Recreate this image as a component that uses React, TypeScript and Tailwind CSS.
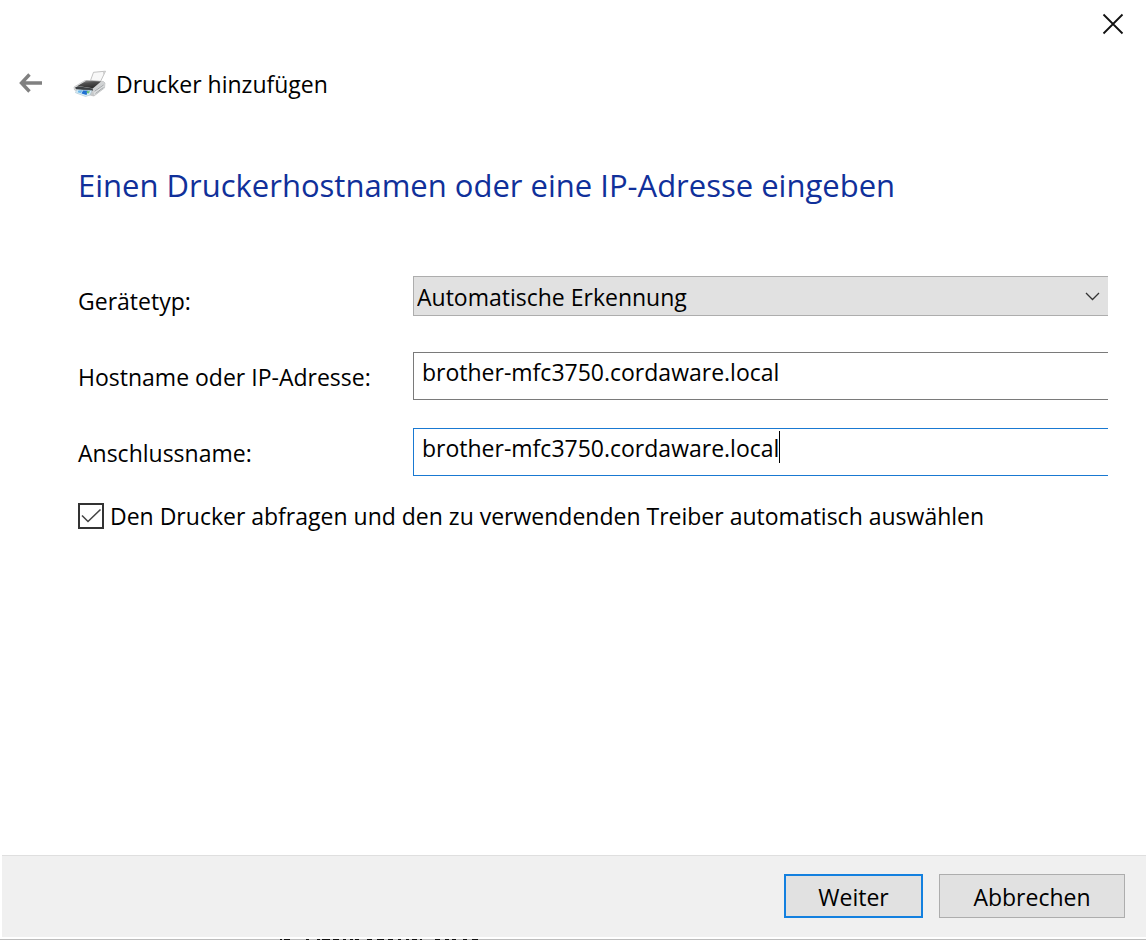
import React, { useState } from 'react';

interface FieldRowProps {
  id: string;
  label: string;
  children: React.ReactNode;
}

const FieldRow: React.FC<FieldRowProps> = ({ id, label, children }) => (
  <div className="flex h-12 items-start">
    <label htmlFor={id} className="w-[335px] shrink-0 pt-2 leading-[34px]">
      {label}
    </label>
    {children}
  </div>
);

const PrinterIcon = () => (
  <svg width="34" height="28" viewBox="0 0 34 28" aria-hidden="true">
    <defs>
      <linearGradient id="lid" x1="0" y1="0" x2="0.4" y2="1">
        <stop offset="0" stopColor="#a8a8a8" />
        <stop offset="0.45" stopColor="#4e4e4e" />
        <stop offset="1" stopColor="#2e2e2e" />
      </linearGradient>
      <linearGradient id="body" x1="0" y1="0" x2="1" y2="1">
        <stop offset="0" stopColor="#f4f4f4" />
        <stop offset="1" stopColor="#b5b8ba" />
      </linearGradient>
    </defs>
    {/* paper */}
    <path d="M17.5 10.5 20.5 2.3 32.5 1.2 27.5 11.5Z" fill="#f8f8f8" stroke="#b4b4b4" strokeWidth="0.8" />
    <path d="M32.5 1.2 30.5 5.5 30 2Z" fill="#cfcfcf" />
    {/* body */}
    <path d="M1 17 12 10.5 30.5 11.5 32 13 31.5 18 21 26 18.5 25.5 1.5 20Z" fill="url(#body)" stroke="#b3b5b7" strokeWidth="0.6" />
    <path d="M20.5 21 31.5 13.5 31.2 18 21 25.5Z" fill="#dcdedf" />
    <path d="M21.5 21.3 30.8 14.8M22.5 23.5 30.5 17.5" stroke="#8b8f92" strokeWidth="0.7" />
    <path d="M4.5 16 13.5 10.5 28 11.4 20 18.2Z" fill="url(#lid)" />
    <path d="M2 17.5 5 16.3 20 18.6 19.5 21 3 19.3Z" fill="#3c4043" />
    {/* tray with photo */}
    <path d="M3.5 19.8 19 20.5 17 25 12.5 26.5 2.5 22.7Z" fill="#d9eef8" stroke="#9eb8c5" strokeWidth="0.5" />
    <path d="M5.5 20.5 9.5 20.3 8 23.2 4.5 22.2Z" fill="#6fb9ea" />
    <path d="M10 20.5 15 20.8 13.5 25 8.5 23.6Z" fill="#1f6fd2" />
    <path d="M14 21 17 21.2 15.8 23.6 13.5 23Z" fill="#6cc080" />
  </svg>
);

const WindowsButton: React.FC<{ className: string; children: React.ReactNode }> = ({ className, children }) => (
  <button type="button" className={`h-11 bg-[#e1e1e1] pt-0.5 leading-8 ${className}`}>
    {children}
  </button>
);

export default function App() {
  const [host, setHost] = useState('brother-mfc3750.cordaware.local');
  const [port, setPort] = useState('brother-mfc3750.cordaware.local');
  const [autoDriver, setAutoDriver] = useState(true);

  return (
    <div className="relative flex min-h-screen flex-col border-b border-[#bcbcbc] bg-white pb-0.5 font-['Open_Sans','Noto_Sans',sans-serif] text-[23px] text-black">
      <div className="flex h-12 justify-end pr-3">
        <button type="button" aria-label="Schließen" className="flex w-[42px] items-center justify-center">
          <svg width="22" height="22" viewBox="0 0 22 22" fill="none" stroke="#111" strokeWidth="1.8">
            <path d="M1.5 1.5 20.5 20.5M20.5 1.5 1.5 20.5" />
          </svg>
        </button>
      </div>

      <header className="flex h-[72px] items-center pl-[18px]">
        <button type="button" aria-label="Zurück" className="mr-[30px]">
          <svg width="25" height="22" viewBox="0 0 25 22" fill="none" stroke="#808080" strokeWidth="3.4">
            <path d="M24 10H4M11.5 1.5 3.5 10 11.5 18.5" />
          </svg>
        </button>
        <PrinterIcon />
        <span className="ml-[9px] leading-8">Drucker hinzufügen</span>
      </header>

      <main className="flex-1 pr-[38px] pl-[78px]">
        <h1 className="pt-11 text-[31px] leading-[42px] text-[#10309a]">
          Einen Druckerhostnamen oder eine IP-Adresse eingeben
        </h1>

        <form className="mt-[70px]">
          <div className="flex flex-col gap-7">
            <FieldRow id="device" label="Gerätetyp:">
              <div className="relative flex-1">
                <select
                  id="device"
                  className="block h-10 w-full appearance-none border border-r-0 border-[#adadad] bg-[#e1e1e1] pt-0.5 pl-[3px] leading-8 outline-none"
                >
                  <option>Automatische Erkennung</option>
                </select>
                <svg className="pointer-events-none absolute top-4 right-2 h-[9px] w-[15px]" viewBox="0 0 15 9" fill="none" stroke="#333" strokeWidth="1.3">
                  <path d="M1 1 7.5 7.5 14 1" />
                </svg>
              </div>
            </FieldRow>

            <FieldRow id="host" label="Hostname oder IP-Adresse:">
              <input
                id="host"
                type="text"
                value={host}
                onChange={(e) => setHost(e.target.value)}
                className="h-12 min-w-0 flex-1 border border-r-0 border-[#7a7a7a] bg-white pb-2 pl-2 outline-none"
              />
            </FieldRow>

            <FieldRow id="port" label="Anschlussname:">
              <div className="flex h-12 min-w-0 flex-1 items-start border border-r-0 border-[#1979d2] pt-0.5 pl-2">
                <input
                  id="port"
                  type="text"
                  value={port}
                  onChange={(e) => setPort(e.target.value)}
                  className="field-sizing-content h-10 max-w-full bg-white pb-1.5 outline-none"
                />
                <span className="h-8 w-px bg-black" />
              </div>
            </FieldRow>
          </div>

          <label className="mt-6 flex items-center gap-1.5 leading-8">
            <span className="relative h-[26px] w-[26px] shrink-0">
              <input
                type="checkbox"
                checked={autoDriver}
                onChange={(e) => setAutoDriver(e.target.checked)}
                className="block h-[26px] w-[26px] appearance-none border-2 border-[#333] bg-white"
              />
              {autoDriver && (
                <svg className="pointer-events-none absolute inset-0" width="26" height="26" viewBox="0 0 26 26" fill="none" stroke="#444" strokeWidth="1.6">
                  <path d="M4 12.5 10 18.5 22.5 6.5" />
                </svg>
              )}
            </span>
            Den Drucker abfragen und den zu verwendenden Treiber automatisch auswählen
          </label>
        </form>
      </main>

      <footer className="ml-0.5 flex h-[82px] justify-end gap-4 border-t border-[#dfdfdf] bg-[#f0f0f0] pt-[18px] pr-[21px]">
        <WindowsButton className="w-[139px] border-2 border-[#1380df]">Weiter</WindowsButton>
        <WindowsButton className="w-[186px] border border-[#adadad]">Abbrechen</WindowsButton>
      </footer>

      {/* sliver of the page behind the dialog */}
      <svg className="absolute -bottom-px left-[275px]" width="205" height="1" viewBox="0 0 205 1" stroke="#111" aria-hidden="true">
        <path d="M5 .5h2M9 .5h6M31 .5h3M42 .5h3M47 .5h8M58 .5h6M68 .5h3M75 .5h3M80 .5h4M92 .5h5M102 .5h7M113 .5h5M123 .5h3M131 .5h3M137 .5h5M145 .5h2M160 .5h5M170 .5h4M177 .5h4M188 .5h4M197 .5h6" />
      </svg>
    </div>
  );
}
